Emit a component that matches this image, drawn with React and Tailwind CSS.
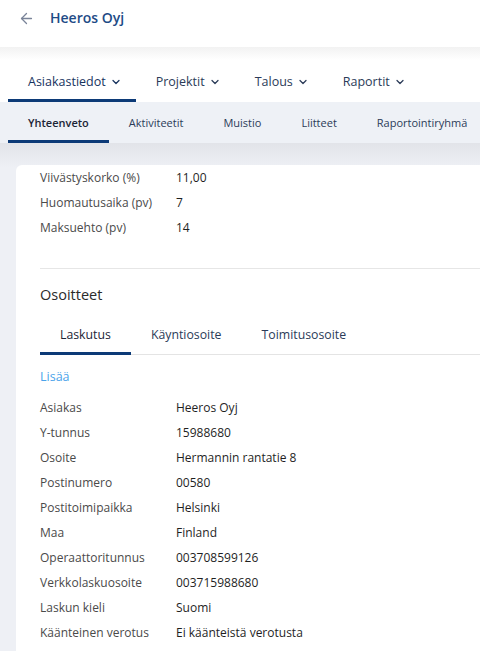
import { ChevronDown, ArrowLeft } from "lucide-react";

const topNav = ["Asiakastiedot", "Projektit", "Talous", "Raportit"];
const subNav = ["Yhteenveto", "Aktiviteetit", "Muistio", "Liitteet", "Raportointiryhmä"];
const addrTabs = ["Laskutus", "Käyntiosoite", "Toimitusosoite"];

const terms = [
  ["Viivästyskorko (%)", "11,00"],
  ["Huomautusaika (pv)", "7"],
  ["Maksuehto (pv)", "14"],
];

const billing = [
  ["Asiakas", "Heeros Oyj"],
  ["Y-tunnus", "15988680"],
  ["Osoite", "Hermannin rantatie 8"],
  ["Postinumero", "00580"],
  ["Postitoimipaikka", "Helsinki"],
  ["Maa", "Finland"],
  ["Operaattoritunnus", "003708599126"],
  ["Verkkolaskuosoite", "003715988680"],
  ["Laskun kieli", "Suomi"],
  ["Käänteinen verotus", "Ei käänteistä verotusta"],
];

function Row({ label, value }) {
  return (
    <div className="flex h-[25px] items-center text-[12px]">
      <div className="w-[136px] shrink-0 text-[#4a4a4a]">{label}</div>
      <div className="text-[#1f1f1f]">{value}</div>
    </div>
  );
}

export default function App() {
  return (
    <div
      className="w-[480px] h-[651px] overflow-hidden bg-[#eef0f5]"
      style={{ fontFamily: '"Open Sans", "Noto Sans", sans-serif' }}
    >
      {/* HEADER */}
      <div className="h-[47px] bg-white flex items-start pt-[8px] pl-[18px]">
        <div className="h-[20px] flex items-center">
          <ArrowLeft size={17} strokeWidth={1.8} className="text-[#7a8499]" />
        </div>
        <div className="ml-[15px] h-[20px] leading-[20px] text-[14px] font-semibold text-[#1e4b86]">
          Heeros Oyj
        </div>
      </div>
      <div className="h-[13px] bg-gradient-to-b from-[#f2f2f2] to-white" />

      {/* TOP NAV */}
      <div className="bg-white flex pl-2 h-[42px]">
        {topNav.map((t, i) => (
          <div
            key={t}
            className={
              "flex items-center gap-1 pl-5 pr-[14px] pt-[5px] text-[12.5px] border-b-[3px] " +
              (i === 0 ? "border-[#0c3a77] text-[#17335e]" : "border-transparent text-[#2b3b58]")
            }
          >
            {t}
            <ChevronDown size={12} strokeWidth={2.5} />
          </div>
        ))}
      </div>

      {/* SUB NAV */}
      <div className="bg-[#eef1f6] flex pl-2 h-[41px]">
        {subNav.map((t, i) => (
          <div
            key={t}
            className={
              "flex items-center px-5 pt-[5px] text-[11px] border-b-[3px] " +
              (i === 0 ? "border-[#0c3a77] text-[#1c2536] font-semibold" : "border-transparent text-[#2b3b58]")
            }
          >
            {t}
          </div>
        ))}
      </div>
      <div className="h-[24px] bg-gradient-to-b from-[#e2e4e9] to-[#eef0f5]" />

      {/* CARD */}
      <div className="ml-4 bg-white rounded-tl-md h-[500px] pl-6">
        <div className="-mt-[2px]">
          {terms.map(([l, v]) => (
            <Row key={l} label={l} value={v} />
          ))}
        </div>

        <div className="mt-[28px] border-t border-[#e6e6e6]" />

        <div className="mt-[15px] text-[14.5px] font-medium text-[#2b2b2b]">Osoitteet</div>

        <div className="mt-[13px] flex border-b border-[#e4e4e4]">
          {addrTabs.map((t, i) => (
            <div
              key={t}
              className={
                "px-5 pt-[7px] pb-[8px] text-[12.3px] border-b-[3px] -mb-px " +
                (i === 0 ? "border-[#0c3a77] text-[#1c2536]" : "border-transparent text-[#2b3b58]")
              }
            >
              {t}
            </div>
          ))}
        </div>

        <div className="mt-[13px] text-[12.5px] text-[#4aa3ea]">Lisää</div>

        <div className="mt-[9px]">
          {billing.map(([l, v]) => (
            <Row key={l} label={l} value={v} />
          ))}
        </div>
      </div>
    </div>
  );
}
